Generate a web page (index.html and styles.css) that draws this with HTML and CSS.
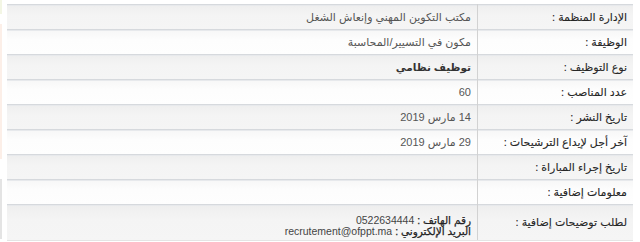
FILE: index.html
```html
<!DOCTYPE html>
<html lang="ar">
<head>
<meta charset="utf-8">
<link rel="stylesheet" href="styles.css">
</head>
<body>
<div class="page">
  <div class="edge">
    <span class="edge-a"></span>
    <span class="edge-b"></span>
    <span class="edge-c"></span>
    <span class="edge-d"></span>
  </div>
  <table class="info" dir="rtl">
    <tr class="odd"><th>الإدارة المنظمة :</th><td>مكتب التكوين المهني وإنعاش الشغل</td></tr>
    <tr class="even"><th>الوظيفة :</th><td>مكون في التسيير/المحاسبة</td></tr>
    <tr class="odd"><th>نوع التوظيف :</th><td class="strong">توظيف نظامي</td></tr>
    <tr class="even"><th>عدد المناصب :</th><td>60</td></tr>
    <tr class="odd"><th>تاريخ النشر :</th><td>14 مارس 2019</td></tr>
    <tr class="even"><th>آخر أجل لإيداع الترشيحات :</th><td>29 مارس 2019</td></tr>
    <tr class="odd"><th>تاريخ إجراء المباراة :</th><td></td></tr>
    <tr class="even"><th>معلومات إضافية :</th><td></td></tr>
    <tr class="odd tall"><th>لطلب توضيحات إضافية :</th><td class="contact"><span class="key">رقم الهاتف :</span> 0522634444<br><span class="key">البريد الإلكتروني :</span> recrutement@ofppt.ma</td></tr>
  </table>
</div>
</body>
</html>
```
FILE: styles.css
```css
html, body {
  margin: 0;
  padding: 0;
  background: #ffffff;
}
.page {
  display: flex;
  padding: 4px 7px 0 0;
}
.edge {
  display: flex;
  flex-direction: column;
  width: 2px;
  margin-top: -4px;
  margin-right: 5px;
}
.edge-a { height: 14px; background: #f3f6e4; }
.edge-b { height: 10px; background: #ffffff; }
.edge-c { height: 135px; background: #fcefe8; }
.edge-d { height: 60px; margin-top: 20px; background: #e4e4e4; }
.info {
  flex: 1;
  border-collapse: collapse;
  font-family: "Liberation Sans", "DejaVu Sans", sans-serif;
  font-size: 11px;
}
.info tr {
  height: 25px;
}
.info tr.tall {
  height: 36px;
}
.info th, .info td {
  border-top: 1px solid #d6d9dd;
  box-shadow: inset 0 1px 0 #e7e9ec;
  padding: 0 6px;
  text-align: right;
  vertical-align: middle;
  white-space: nowrap;
}
.info tr.tall th, .info tr.tall td {
  border-bottom: 1px solid #e4e4e4;
}
.info th {
  width: 149px;
  padding-right: 6px;
  padding-left: 0;
  font-weight: normal;
  color: #262626;
  -webkit-text-stroke: 0.1px #262626;
  border-left: 1px solid #d2d2d2;
}
.info td {
  color: #555555;
}
.info tr.odd {
  background: linear-gradient(#eeeeee, #f4f4f4 40%, #f5f5f5);
}
.info tr.even {
  background: linear-gradient(#f7f7f7, #fdfdfd 40%, #fefefe);
}
.info td.strong {
  font-size: 10.5px;
  font-weight: bold;
  color: #333333;
}
.info td.contact {
  line-height: 11px;
  padding-top: 7px;
  font-size: 10.5px;
  color: #444444;
}
.info td.contact .key {
  color: #222222;
  -webkit-text-stroke: 0.25px #222222;
}
```
